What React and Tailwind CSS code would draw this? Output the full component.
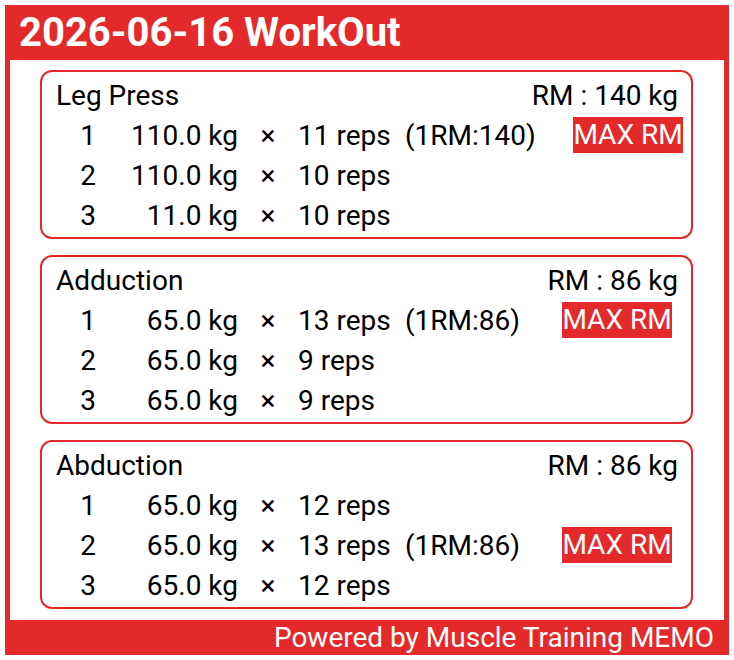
const workouts = [
  {
    name: 'Leg Press',
    rm: 140,
    rmCol: 'w-[168px]',
    sets: [
      { no: 1, kg: '110.0', reps: 11, oneRm: 140, max: true },
      { no: 2, kg: '110.0', reps: 10 },
      { no: 3, kg: '11.0', reps: 10 },
    ],
  },
  {
    name: 'Adduction',
    rm: 86,
    rmCol: 'w-[157px]',
    sets: [
      { no: 1, kg: '65.0', reps: 13, oneRm: 86, max: true },
      { no: 2, kg: '65.0', reps: 9 },
      { no: 3, kg: '65.0', reps: 9 },
    ],
  },
  {
    name: 'Abduction',
    rm: 86,
    rmCol: 'w-[157px]',
    sets: [
      { no: 1, kg: '65.0', reps: 12 },
      { no: 2, kg: '65.0', reps: 13, oneRm: 86, max: true },
      { no: 3, kg: '65.0', reps: 12 },
    ],
  },
];

function SetRow({ s, rmCol }) {
  return (
    <div className="flex items-center h-[40px] whitespace-nowrap">
      <div className="w-[64px] shrink-0 text-center">{s.no}</div>
      <div className="w-[118px] shrink-0 text-right">{s.kg} kg</div>
      <div className="w-[60px] shrink-0 text-center">×</div>
      <div className="w-[107px] shrink-0">{s.reps} reps</div>
      {s.oneRm && <div className={`${rmCol} shrink-0`}>(1RM:{s.oneRm})</div>}
      {s.max && (
        <div className="w-[110px] shrink-0 h-[36px] leading-[36px] -mt-[3px] text-center bg-[#e4292b] text-white">
          MAX RM
        </div>
      )}
    </div>
  );
}

function ExerciseCard({ w }) {
  return (
    <div className="border-2 border-[#e4292b] rounded-[12px] pl-[14px] pr-[13px] pt-[4px] pb-[1px]">
      <div className="flex justify-between items-center h-[40px]">
        <span>{w.name}</span>
        <span>RM : {w.rm} kg</span>
      </div>
      {w.sets.map(s => <SetRow key={s.no} s={s} rmCol={w.rmCol} />)}
    </div>
  );
}

export default function App() {
  return (
    <div className="w-[734px] h-[660px] bg-white p-[5px] font-['Roboto',sans-serif]">
      <div className="w-[724px] h-[650px] bg-[#e4292b] px-[5px] flex flex-col">
        {/* Title */}
        <div className="h-[55px] flex items-center pl-[9px] text-white font-bold text-[40px] leading-none">
          2026-06-16 WorkOut
        </div>

        {/* Body */}
        <div className="bg-white flex-1 pt-[10px] pl-[30px] pr-[31px] flex flex-col gap-[16px] text-[28px] text-black">
          {workouts.map(w => <ExerciseCard key={w.name} w={w} />)}
        </div>

        {/* Footer */}
        <div className="h-[35px] flex items-center justify-end pr-[10px] text-white text-[28px] leading-none">
          Powered by Muscle Training MEMO
        </div>
      </div>
    </div>
  );
}
